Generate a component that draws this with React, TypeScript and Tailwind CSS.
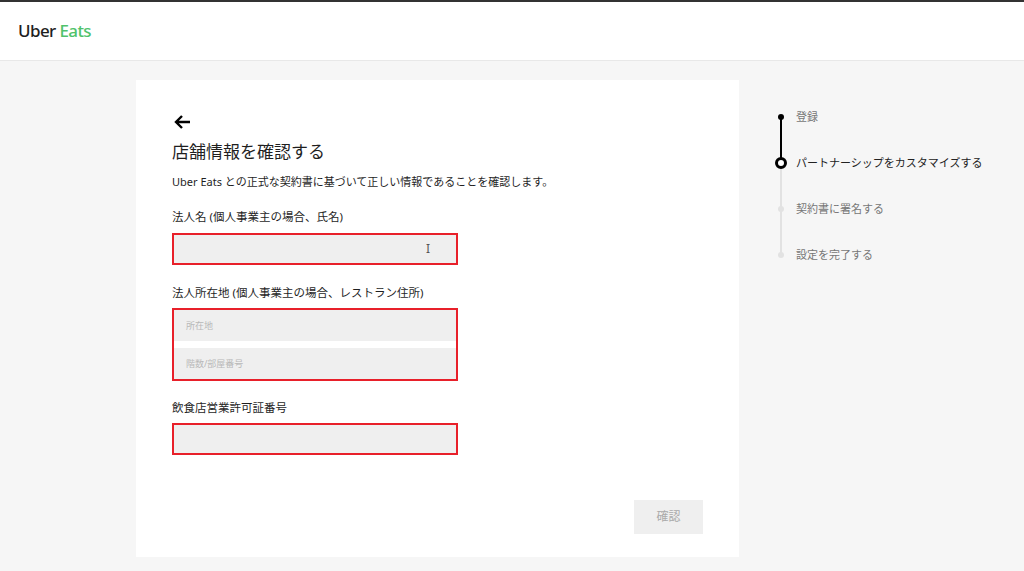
const font = { fontFamily: '"Noto Sans", "Noto Sans CJK JP", sans-serif' };

const steps = [
  { label: "登録", state: "done" },
  { label: "パートナーシップをカスタマイズする", state: "current" },
  { label: "契約書に署名する", state: "todo" },
  { label: "設定を完了する", state: "todo" },
];

export default function App() {
  return (
    <div style={font} className="h-[571px] w-[1024px] overflow-hidden bg-[#f6f6f6] text-[#1f1f1f]">
      <header className="flex h-[61px] items-center border-t-2 border-b border-t-[#333] border-b-[#e8e8e8] bg-white px-[18px]">
        <span className="text-[17px] font-medium tracking-[-0.6px]">
          Uber <span className="text-[#4fc26b]">Eats</span>
        </span>
      </header>

      <div className="flex pt-[19px]">
        <main className="ml-[136px] h-[477px] w-[603px] bg-white px-[36px] pt-[34px]">
          <svg width="18" height="16" viewBox="0 0 18 16" className="ml-[1px]">
            <path d="M17 8H3M9 2L3 8l6 6" fill="none" stroke="#000" strokeWidth="2.4" />
          </svg>
          <h1 className="mt-[10px] text-[17px] leading-[24px]">店舗情報を確認する</h1>
          <p className="mt-[10px] text-[11px] leading-[16px]">
            Uber Eats との正式な契約書に基づいて正しい情報であることを確認します。
          </p>

          <p className="mt-[19px] text-[11.5px] leading-[16px]">法人名 (個人事業主の場合、氏名)</p>
          <div className="mt-[8px] flex h-[32px] w-[286px] items-center justify-end border-2 border-[#e8202a] bg-[#efefef] pr-[26px] text-[12px] text-[#555]">
            I
          </div>

          <p className="mt-[20px] text-[11.5px] leading-[16px]">法人所在地 (個人事業主の場合、レストラン住所)</p>
          <div className="mt-[7px] flex w-[286px] flex-col gap-[7px] border-2 border-[#e8202a] bg-white">
            <div className="flex h-[31px] items-center bg-[#efefef] px-[12px] text-[9px] text-[#b8b8b8]">所在地</div>
            <div className="flex h-[31px] items-center bg-[#efefef] px-[12px] text-[9px] text-[#b8b8b8]">階数/部屋番号</div>
          </div>

          <p className="mt-[19px] text-[11.5px] leading-[16px]">飲食店営業許可証番号</p>
          <div className="mt-[7px] h-[32px] w-[286px] border-2 border-[#e8202a] bg-[#efefef]" />

          <div className="mt-[45px] flex justify-end">
            <button className="h-[34px] w-[69px] bg-[#efefef] text-[12px] text-[#aaa]">確認</button>
          </div>
        </main>

        <aside className="ml-[35px] pt-[27px]">
          {steps.map((s, i) => (
            <div key={s.label} className="flex h-[46px] items-start">
              <div className="relative flex w-[14px] justify-center">
                {i < steps.length - 1 && (
                  <span
                    className={`absolute top-[10px] h-[46px] w-[2px] ${i === 0 ? "bg-black" : "bg-[#e2e2e2]"}`}
                  />
                )}
                {s.state === "done" && <span className="relative mt-[7px] h-[6px] w-[6px] rounded-full bg-black" />}
                {s.state === "current" && (
                  <span className="relative mt-[4px] h-[12px] w-[12px] rounded-full border-[3px] border-black bg-white" />
                )}
                {s.state === "todo" && <span className="relative mt-[7px] h-[6px] w-[6px] rounded-full bg-[#e2e2e2]" />}
              </div>
              <span className={`ml-[8px] text-[11px] leading-[20px] ${s.state === "current" ? "text-[#222]" : "text-[#777]"}`}>
                {s.label}
              </span>
            </div>
          ))}
        </aside>
      </div>
    </div>
  );
}
